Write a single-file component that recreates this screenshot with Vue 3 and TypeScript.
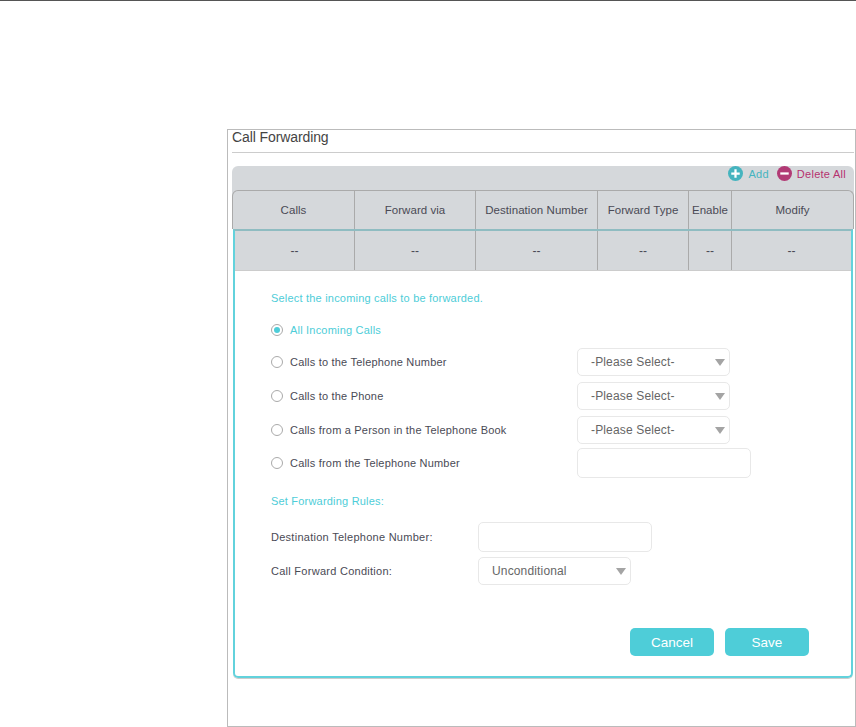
<script setup lang="ts">
const columns: string[] = ['Calls', 'Forward via', 'Destination Number', 'Forward Type', 'Enable', 'Modify'];

class CallOption {
	label: string;
	field: 'none' | 'select' | 'input';
	checked: boolean;
	constructor(label: string, field: 'none' | 'select' | 'input', checked: boolean = false) {
		this.label = label;
		this.field = field;
		this.checked = checked;
	}
}

const callOptions: CallOption[] = [
	new CallOption('All Incoming Calls', 'none', true),
	new CallOption('Calls to the Telephone Number', 'select'),
	new CallOption('Calls to the Phone', 'select'),
	new CallOption('Calls from a Person in the Telephone Book', 'select'),
	new CallOption('Calls from the Telephone Number', 'input')
];
</script>

<template>
	<div class="page">
		<div class="frame">
			<div class="title">Call Forwarding</div>
			<div class="card">
				<div class="actions">
					<span class="action add">
						<svg viewBox="0 0 16 16" width="15" height="15">
							<circle cx="8" cy="8" r="8" fill="#45b4bf" />
							<path d="M8 3.5v9M3.5 8h9" stroke="#fff" stroke-width="2.4" />
						</svg>
						Add
					</span>
					<span class="action del">
						<svg viewBox="0 0 16 16" width="15" height="15">
							<circle cx="8" cy="8" r="8" fill="#b23a75" />
							<path d="M3.5 8h9" stroke="#fff" stroke-width="2.4" />
						</svg>
						Delete All
					</span>
				</div>
				<div class="head">
					<div v-for="c in columns" :key="c" class="cell">{{ c }}</div>
				</div>
			</div>
			<div class="panel">
				<div class="row">
					<div v-for="c in columns" :key="c" class="cell">--</div>
				</div>
				<div class="form">
					<div class="section first">Select the incoming calls to be forwarded.</div>
					<div class="options">
						<div v-for="o in callOptions" :key="o.label" class="option" :class="{ on: o.checked }">
							<span class="radio"></span>
							<span class="optionLabel">{{ o.label }}</span>
							<div v-if="o.field === 'select'" class="select">
								<span>-Please Select-</span>
								<i class="caret"></i>
							</div>
							<div v-else-if="o.field === 'input'" class="input"></div>
						</div>
					</div>
					<div class="section rules">Set Forwarding Rules:</div>
					<div class="field dest">
						<label>Destination Telephone Number:</label>
						<div class="input"></div>
					</div>
					<div class="field cond">
						<label>Call Forward Condition:</label>
						<div class="select">
							<span>Unconditional</span>
							<i class="caret"></i>
						</div>
					</div>
					<div class="buttons">
						<button>Cancel</button>
						<button>Save</button>
					</div>
				</div>
			</div>
		</div>
	</div>
</template>

<style>
html, body {
	background: #fff;
}
</style>

<style scoped>
.page {
	border-top: 1px solid #555;
	height: 726px;
	overflow: hidden;
	font-family: "Liberation Sans", Arial, sans-serif;
	color: #4a4a55;
}
.frame {
	box-sizing: border-box;
	margin: 128px 0 0 227px;
	width: 629px;
	height: 598px;
	border: 1px solid #bbb;
	padding: 0 1px 0 4px;
}
.title {
	height: 22px;
	line-height: 15px;
	font-size: 14px;
	letter-spacing: -.1px;
	color: #444;
	border-bottom: 1px solid #ccc;
	margin-bottom: 13px;
}
.card {
	background: #d5d8db;
	border-radius: 6px 6px 0 0;
}
.actions {
	height: 24px;
	display: flex;
	justify-content: flex-end;
	align-items: flex-start;
	gap: 8px;
	padding-right: 8px;
	font-size: 11px;
	letter-spacing: .27px;
}
.action {
	display: flex;
	align-items: center;
	gap: 5px;
	height: 15px;
}
.add {
	color: #45b4bf;
}
.del {
	color: #b5316f;
}
.head {
	display: grid;
	grid-template-columns: 122px 121px 122px 91px 43px 1fr;
	height: 39px;
	box-sizing: border-box;
	border: 1px solid #aaa;
	border-bottom: 0;
	border-radius: 6px 6px 0 0;
	font-size: 11.5px;
	letter-spacing: .05px;
}
.cell {
	display: flex;
	align-items: center;
	justify-content: center;
	border-right: 1px solid #aaa;
}
.cell:last-child {
	border-right: 0;
}
.panel {
	box-sizing: border-box;
	margin: 0 1px;
	height: 449px;
	border: 2px solid #62d2dc;
	border-top-color: #8fbcc1;
	border-radius: 0 0 5px 5px;
	box-shadow: 0 1px 0 #ccc;
}
.row {
	display: grid;
	grid-template-columns: 120px 121px 122px 91px 43px 1fr;
	height: 39px;
	box-sizing: content-box;
	background: #d5d8db;
	border-bottom: 1px solid #ccc;
	font-size: 12px;
}
.form {
	padding: 20px 0 0 36px;
	font-size: 11px;
	letter-spacing: .2px;
}
.section {
	color: #4ecdd8;
	line-height: 14px;
}
.options {
	margin-top: 11px;
	display: flex;
	flex-direction: column;
}
.option {
	display: flex;
	align-items: center;
	height: 28px;
	margin-bottom: 6px;
}
.option:first-child,
.option:nth-child(4) {
	margin-bottom: 4px;
}
.option:last-child {
	height: 30px;
	margin-bottom: 0;
}
.option.on {
	color: #4ecdd8;
}
.radio {
	box-sizing: border-box;
	width: 12px;
	height: 12px;
	border: 1px solid #aaa;
	border-radius: 50%;
	margin-right: 7px;
	position: relative;
}
.on .radio::after {
	content: '';
	position: absolute;
	left: 2px;
	top: 2px;
	width: 6px;
	height: 6px;
	border-radius: 50%;
	background: #4ecdd8;
}
.optionLabel {
	width: 287px;
	flex: none;
}
.select {
	box-sizing: border-box;
	width: 153px;
	height: 28px;
	border: 1px solid #e8e8e8;
	border-radius: 5px;
	padding: 0 4px 0 13px;
	display: flex;
	align-items: center;
	justify-content: space-between;
	font-size: 12px;
	letter-spacing: .15px;
	color: #666;
}
.caret {
	width: 0;
	height: 0;
	border-left: 5px solid transparent;
	border-right: 5px solid transparent;
	border-top: 7px solid #a4a4a4;
}
.input {
	box-sizing: border-box;
	width: 174px;
	height: 30px;
	border: 1px solid #e8e8e8;
	border-radius: 5px;
}
.rules {
	margin-top: 16px;
}
.field {
	display: flex;
	align-items: center;
	letter-spacing: .27px;
}
.field label {
	width: 207px;
	flex: none;
}
.dest {
	margin-top: 14px;
}
.cond {
	margin-top: 5px;
}
.buttons {
	display: flex;
	gap: 11px;
	margin: 43px 0 0 359px;
}
button {
	width: 84px;
	height: 28px;
	border: 0;
	border-radius: 5px;
	background: #4ecdd8;
	color: #fff;
	font-family: inherit;
	font-size: 13.5px;
	padding: 0;
}
</style>
